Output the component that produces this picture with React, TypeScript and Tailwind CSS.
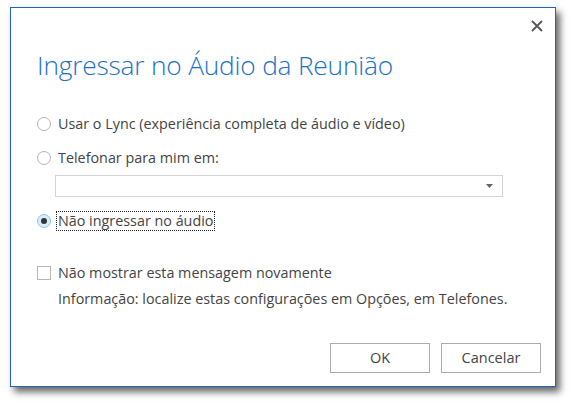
import React from 'react'

/**
 * Dialog: join meeting audio options.
 */
function Radio({ checked }: { checked?: boolean }) {
  return (
    <span
      className={
        checked
          ? "w-[14px] h-[14px] rounded-full border border-[#8ec3ea] bg-[#d9ecfa] flex items-center justify-center shrink-0"
          : "w-[14px] h-[14px] rounded-full border border-[#b5b5b5] bg-white shrink-0"
      }
    >
      {checked && <span className="w-[6px] h-[6px] rounded-full bg-[#333]" />}
    </span>
  )
}

export default function App() {
  return (
    <div className="w-[573px] h-[405px] bg-white pt-[7px] pl-[10px] font-['Open_Sans',sans-serif] text-[#444]">
      <div className="w-[546px] h-[380px] border border-[#1f64b5] bg-white shadow-[4px_5px_7px_rgba(0,0,0,0.6)] flex flex-col relative">
        {/* Close */}
        <button className="absolute right-[11px] top-[11px] w-[14px] h-[14px] flex items-center justify-center">
          <svg width="12" height="12" viewBox="0 0 12 12">
            <path d="M1 1L11 11M11 1L1 11" stroke="#555" strokeWidth="1.8" />
          </svg>
        </button>

        <h1 className="mt-[39px] ml-[26px] text-[26.3px] font-light text-[#1b72c4] leading-[36px] tracking-[-0.2px]">
          Ingressar no Áudio da Reunião
        </h1>

        <div className="ml-[26px] mt-[31px] flex flex-col text-[14.35px] leading-[20px]">
          <label className="flex items-center gap-[7px]">
            <Radio />
            <span>Usar o Lync (experiência completa de áudio e vídeo)</span>
          </label>

          <label className="flex items-center gap-[7px] mt-[14px]">
            <Radio />
            <span>Telefonar para mim em:</span>
          </label>

          <div className="ml-[18px] mt-[7px] w-[448px] h-[22px] border border-[#d4d4d4] flex items-center justify-end pr-[9px]">
            <svg width="7" height="4" viewBox="0 0 7 4">
              <path d="M0 0H7L3.5 4Z" fill="#666" />
            </svg>
          </div>

          <label className="flex items-center gap-[6px] mt-[15px]">
            <Radio checked />
            <span className="outline-1 outline-dotted outline-[#222] px-[1px] leading-[18px]">Não ingressar no áudio</span>
          </label>

          <label className="flex items-center gap-[7px] mt-[33px]">
            <span className="w-[14px] h-[14px] border border-[#b5b5b5] bg-white shrink-0" />
            <span>Não mostrar esta mensagem novamente</span>
          </label>
          <p className="ml-[21px] mt-[6px]">
            Informação: localize estas configurações em Opções, em Telefones.
          </p>
        </div>

        <div className="mt-auto mb-[13px] mr-[14px] flex justify-end gap-[11px]">
          <button className="w-[100px] h-[30px] border border-[#acacac] bg-white text-[14.5px] text-[#444]">OK</button>
          <button className="w-[100px] h-[30px] border border-[#acacac] bg-white text-[14.5px] text-[#444]">Cancelar</button>
        </div>
      </div>
    </div>
  )
}
